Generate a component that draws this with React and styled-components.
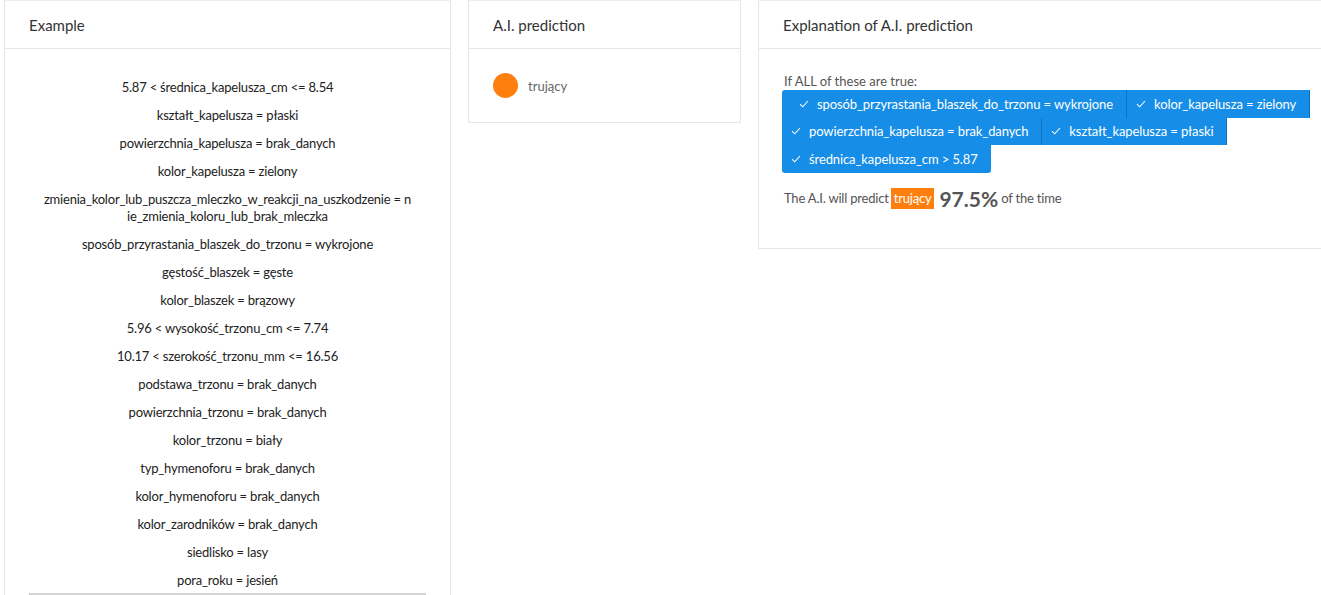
import React from 'react'
import styled, { createGlobalStyle } from 'styled-components'

const GlobalStyle = createGlobalStyle`
  html, body {
    margin: 0;
    padding: 0;
    background: #fff;
    overflow: hidden;
  }
  body {
    font-family: Lato, "Noto Sans", sans-serif;
    color: #333;
  }
`

const Page = styled.div`
  display: grid;
  grid-template-columns: 447px 273px 590px;
  column-gap: 17px;
  align-items: start;
  padding-left: 4px;
  width: 1400px;
`

const Card = styled.section`
  background: #fff;
  border: 1px solid #e6e6e6;
  border-top-color: #eee;
`

const CardHeader = styled.header`
  height: 47px;
  display: flex;
  align-items: center;
  padding: 0 24px;
  border-bottom: 1px solid #e6e6e6;
  font-size: 15px;
  color: #333;
`

const ExampleBody = styled.div`
  padding: 30px 24px 0;
`

const Feature = styled.p`
  margin: 0 0 11px;
  padding: 0 14.5px;
  font-size: 13px;
  line-height: 17px;
  letter-spacing: -0.2px;
  text-align: center;
  color: #222;
  word-break: break-all;
  &:last-of-type {
    margin-bottom: 0;
  }
`

const TableEdge = styled.div`
  height: 2px;
  background: #d4d4d4;
  margin-top: 4px;
`

const PredictionBody = styled.div`
  display: flex;
  align-items: center;
  gap: 10px;
  padding: 24px;
`

const Dot = styled.span`
  width: 25px;
  height: 25px;
  border-radius: 50%;
  background: ${({ color }) => color};
`

const MutedText = styled.span`
  font-size: 13px;
  color: #666;
`

const ExplainBody = styled.div`
  padding: 24px 24px 24px 25px;
`

const Lead = styled.div`
  font-size: 13px;
  line-height: 17px;
  color: #555;
`

const Chips = styled.div`
  display: flex;
  flex-wrap: wrap;
  max-width: 540px;
  margin-left: -2px;
`

const Chip = styled.span`
  display: inline-flex;
  align-items: center;
  gap: 8px;
  height: 27.5px;
  padding: 0 13px 0 ${({ indent }) => (indent ? 17 : 9)}px;
  background: #168de6;
  color: #fff;
  font-size: 13px;
  letter-spacing: -0.1px;
  border-right: 1px solid #0f72c0;
  box-sizing: border-box;
  &:first-child {
    border-radius: 3px 0 0 0;
  }
  &:last-child {
    border-right: none;
    border-radius: 0 0 3px 3px;
  }
`

const Verdict = styled.div`
  display: flex;
  align-items: center;
  margin-top: 13px;
  margin-bottom: 13px;
  font-size: 13px;
  letter-spacing: -0.2px;
  color: #555;
`

const Label = styled.span`
  background: ${({ color }) => color};
  color: #fff;
  padding: 2px 3px;
  line-height: 17px;
  margin: 0 5px 0 2px;
`

const Percent = styled.strong`
  font-size: 21px;
  font-weight: 700;
  letter-spacing: 0;
  color: #555;
  margin-right: 3px;
`

const Check = () => (
  <svg width="10" height="8" viewBox="0 0 10 8" fill="none">
    <path d="M1 4.2 L3.7 6.8 L9 1" stroke="#fff" strokeWidth="1.1" />
  </svg>
)

const ORANGE = '#ff7f0e'

const features = [
  '5.87 < średnica_kapelusza_cm <= 8.54',
  'kształt_kapelusza = płaski',
  'powierzchnia_kapelusza = brak_danych',
  'kolor_kapelusza = zielony',
  'zmienia_kolor_lub_puszcza_mleczko_w_reakcji_na_uszkodzenie = nie_zmienia_koloru_lub_brak_mleczka',
  'sposób_przyrastania_blaszek_do_trzonu = wykrojone',
  'gęstość_blaszek = gęste',
  'kolor_blaszek = brązowy',
  '5.96 < wysokość_trzonu_cm <= 7.74',
  '10.17 < szerokość_trzonu_mm <= 16.56',
  'podstawa_trzonu = brak_danych',
  'powierzchnia_trzonu = brak_danych',
  'kolor_trzonu = biały',
  'typ_hymenoforu = brak_danych',
  'kolor_hymenoforu = brak_danych',
  'kolor_zarodników = brak_danych',
  'siedlisko = lasy',
  'pora_roku = jesień',
]

const rules = [
  'sposób_przyrastania_blaszek_do_trzonu = wykrojone',
  'kolor_kapelusza = zielony',
  'powierzchnia_kapelusza = brak_danych',
  'kształt_kapelusza = płaski',
  'średnica_kapelusza_cm > 5.87',
]

export default function App() {
  return (
    <>
      <GlobalStyle />
      <Page>
        <Card>
          <CardHeader>Example</CardHeader>
          <ExampleBody>
            {features.map((f) => (
              <Feature key={f}>{f}</Feature>
            ))}
            <TableEdge />
          </ExampleBody>
        </Card>

        <Card>
          <CardHeader>A.I. prediction</CardHeader>
          <PredictionBody>
            <Dot color={ORANGE} />
            <MutedText>trujący</MutedText>
          </PredictionBody>
        </Card>

        <Card>
          <CardHeader>Explanation of A.I. prediction</CardHeader>
          <ExplainBody>
            <Lead>If ALL of these are true:</Lead>
            <Chips>
              {rules.map((r, i) => (
                <Chip key={r} indent={i === 0}>
                  <Check />
                  {r}
                </Chip>
              ))}
            </Chips>
            <Verdict>
              The A.I. will predict
              <Label color={ORANGE}>trujący</Label>
              <Percent>97.5%</Percent>
              of the time
            </Verdict>
          </ExplainBody>
        </Card>
      </Page>
    </>
  )
}
